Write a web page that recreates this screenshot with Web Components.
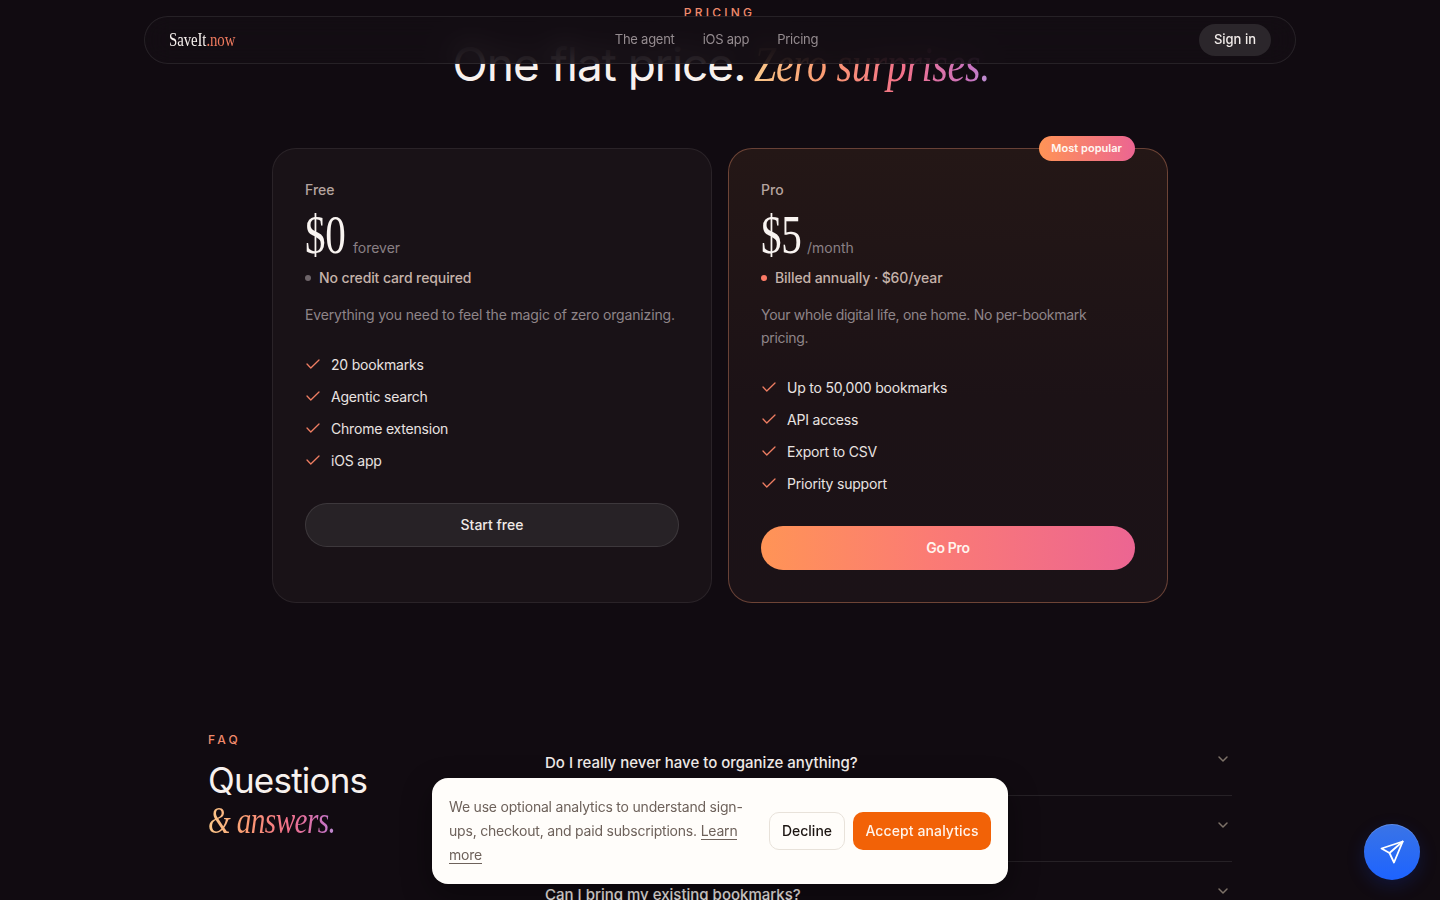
<!doctype html>
<html lang="en"><head><meta charset="utf-8"><title>SaveIt.now</title>
<style>
html,body{margin:0;height:900px;overflow:hidden;background:#110b11}
body{font-family:Inter,"Liberation Sans",sans-serif;color:#f7f1ee}
</style></head><body>
<site-nav></site-nav>
<pricing-section>
  <price-card name="Free" price="$0" period="forever" note="No credit card required" desc="Everything you need to feel the magic of zero organizing." cta="Start free">
    <check-item>20 bookmarks</check-item><check-item>Agentic search</check-item><check-item>Chrome extension</check-item><check-item>iOS app</check-item>
  </price-card>
  <price-card featured name="Pro" price="$5" period="/month" note="Billed annually · $60/year" desc="Your whole digital life, one home. No per-bookmark pricing." cta="Go Pro">
    <check-item>Up to 50,000 bookmarks</check-item><check-item>API access</check-item><check-item>Export to CSV</check-item><check-item>Priority support</check-item>
  </price-card>
</pricing-section>
<faq-section>
  <faq-item>Do I really never have to organize anything?</faq-item>
  <faq-item></faq-item>
  <faq-item>Can I bring my existing bookmarks?</faq-item>
</faq-section>
<cookie-banner></cookie-banner>
<chat-fab></chat-fab>
<script>
const SERIF='"Liberation Serif","Times New Roman",serif';
const GRAD='linear-gradient(90deg,#fbc88a 0%,#fb9a72 30%,#f2708a 62%,#c873c0 90%,#b79ad8 100%)';
function def(name,html){
  customElements.define(name,class extends HTMLElement{
    connectedCallback(){
      if(this.shadowRoot)return;
      const r=this.attachShadow({mode:'open'});
      r.innerHTML=typeof html==='function'?html(this):html;
    }
  });
}
def('site-nav',`<style>
:host{position:fixed;z-index:10;left:144px;top:16px;width:1152px;height:48px;box-sizing:border-box;display:grid;grid-template-columns:1fr auto 1fr;align-items:center;padding:0 24px;border:1px solid rgba(255,255,255,.085);border-radius:24px;background:rgba(20,13,19,.82);backdrop-filter:blur(14px);-webkit-backdrop-filter:blur(14px)}
.logo{font:400 19px/24px ${SERIF};color:#f7f1ee;display:inline-block;transform:scaleX(.78);transform-origin:left center;letter-spacing:-.1px;white-space:nowrap}
.logo span{color:#ee7a5e}
nav{display:flex;gap:28px;font-size:13px;line-height:16px;letter-spacing:-.25px;color:#958c90;margin:-2px 7px 0 0}
.end{justify-self:end}
.btn{display:block;height:32px;line-height:31px;padding:0 15px;border-radius:16px;background:#2b262b;font-size:13px;font-weight:500;color:#f2ecea}
</style><div><span class="logo">SaveIt<span>.now</span></span></div><nav><span>The agent</span><span>iOS app</span><span>Pricing</span></nav><div class="end"><span class="btn">Sign in</span></div>`);
def('pricing-section',`<style>
:host{display:block;padding-top:6px;text-align:center}
.eyebrow{font-size:12px;line-height:14px;font-weight:500;letter-spacing:.27em;color:#f08a6c;padding-right:1px}
h2{margin:0;padding:15px 0 0 5px;height:128px;box-sizing:border-box;display:flex;justify-content:center;align-items:baseline;gap:9px;font-size:46px;line-height:58px;font-weight:400;letter-spacing:-1px;white-space:nowrap}
.s{font:italic 400 50px/58px ${SERIF};display:inline-block;white-space:nowrap;letter-spacing:-.4px;transform:scaleX(.8);transform-origin:left center;width:max-content;padding-right:6px;margin-right:-63px;text-align:left;background:${GRAD};-webkit-background-clip:text;background-clip:text;color:transparent;padding-bottom:14px;margin-bottom:-14px}
.g{width:896px;margin:0 auto;display:grid;grid-template-columns:1fr 1fr;gap:16px;text-align:left}
</style><div class="eyebrow">PRICING</div><h2><span>One flat price.</span><span class="s">Zero surprises.</span></h2><div class="g"><slot></slot></div>`);
def('price-card',el=>{
 const a=n=>el.getAttribute(n),f=el.hasAttribute('featured');
 return `<style>
:host{display:block;position:relative;box-sizing:border-box;height:455px;padding:32px;border-radius:24px;border:1px solid ${f?'rgba(240,150,110,.36)':'rgba(255,255,255,.075)'};background:${f?'linear-gradient(180deg,#241716 0%,#1c1216 55%,#1b1217 100%)':'#191217'}}
.name{font-size:14px;line-height:18px;font-weight:500;color:#b5a49f}
.pr{display:flex;align-items:baseline;gap:7px;margin-top:11px;height:50px}
.amt{font:400 54px/50px ${SERIF};color:#f9f4f1;display:inline-block;transform:scaleX(.76);transform-origin:left center;width:41px;letter-spacing:-.5px;${f?'width:39px':''}}
.per{font-size:14px;color:#8a8085}
.note{display:flex;align-items:center;gap:8px;margin-top:7px;height:20px;font-size:14px;font-weight:500;color:#c5b2aa;letter-spacing:-.1px}
.dot{width:6px;height:6px;border-radius:50%;margin-top:1px;background:${f?'#fb7a66':'#6d6469'}}
.desc{margin:16px 0 0;font-size:14px;line-height:23px;letter-spacing:${f?'-.3px':'-.15px'};color:#8f8589}
ul{list-style:none;margin:0;padding:22px 0 0;display:block}
.cta{margin-top:27px;height:44px;box-sizing:border-box;padding-bottom:2px;border-radius:22px;display:flex;align-items:center;justify-content:center;font-size:14px;font-weight:500;${f?`background:linear-gradient(90deg,#ff9456 0%,#fb7b74 45%,#ec6592 100%);color:#fff4ee;font-weight:600;letter-spacing:-.3px`:'background:#272226;border:1px solid rgba(255,255,255,.1);color:#efe9e6'}}
.badge{position:absolute;top:-13px;right:32px;height:25px;padding:0 13px 0 12px;border-radius:13px;background:linear-gradient(90deg,#ff9456,#ec6592);font-size:11px;font-weight:600;line-height:25px;color:#fff7f2;letter-spacing:.04px}
</style>${f?'<span class="badge">Most popular</span>':''}<div class="name">${a('name')}</div><div class="pr"><span class="amt">${a('price')}</span><span class="per">${a('period')}</span></div><div class="note"><span class="dot"></span>${a('note')}</div><p class="desc">${a('desc')}</p><ul><slot></slot></ul><div class="cta">${a('cta')}</div>`});
def('check-item',`<style>
:host{display:flex;align-items:center;gap:12px;height:32px;font-size:14px;letter-spacing:-.2px;color:#e9e3e1}
svg{width:14px;height:14px;flex:none;overflow:visible}
</style><svg viewBox="0 0 14 14" fill="none" stroke="#ee7d62" stroke-width="1.3" stroke-linecap="round" stroke-linejoin="round"><path d="M2 7 5.8 11 14 3"/></svg><span><slot></slot></span>`);
def('faq-section',`<style>
:host{display:grid;grid-template-columns:337px 1fr;width:1024px;margin:126px auto 0}
.eyebrow{font-size:12px;line-height:14px;font-weight:500;letter-spacing:.27em;color:#f08a6c;margin-top:4px}
h3{margin:13px 0 0;font-size:35px;line-height:40px;font-weight:400;letter-spacing:-.8px;color:#f7f1ee}
.s{font:italic 400 38px/40px ${SERIF};display:inline-block;white-space:nowrap;transform:scaleX(.77);transform-origin:left center;width:max-content;padding-right:4px;background:${GRAD};-webkit-background-clip:text;background-clip:text;color:transparent}
.r{padding-top:1px}
</style><div><div class="eyebrow">FAQ</div><h3>Questions<br><span class="s">&amp; answers.</span></h3></div><div class="r"><slot></slot></div>`);
def('faq-item',`<style>
:host{display:flex;justify-content:space-between;align-items:flex-start;box-sizing:border-box;height:66px;padding:22px 0 0;border-bottom:1px solid rgba(255,255,255,.09);font-size:15px;line-height:22px;font-weight:500;color:#f3edea}
svg{width:16px;height:16px;margin:-1px 1px 0 0;flex:none}
</style><span><slot></slot></span><svg viewBox="0 0 16 16" fill="none" stroke="#7d7268" stroke-width="1.5" stroke-linecap="round" stroke-linejoin="round"><path d="M4 6l4 4 4-4"/></svg>`);
def('cookie-banner',`<style>
:host{position:fixed;z-index:20;left:432px;top:778px;width:576px;height:106px;box-sizing:border-box;padding:0 17px;display:flex;align-items:center;gap:24px;border-radius:16px;background:#fffdfa;box-shadow:0 10px 30px rgba(0,0,0,.4)}
p{margin:0;flex:1;font-size:14px;line-height:24px;letter-spacing:-.2px;color:#6e625b}
a{color:#6e625b;text-decoration:none;border-bottom:1px solid #6e625b}
.b{display:flex;gap:8px;flex:none}
.x{height:38px;box-sizing:border-box;border-radius:10px;display:flex;align-items:center;justify-content:center;font-size:14px;line-height:16px;font-weight:500;padding-bottom:1px}
.d{width:76px;border:1px solid #e8e2da;color:#1c1512}
.a{width:138px;background:#f26207;color:#fff3ea;letter-spacing:.1px}
</style><p>We use optional analytics to understand sign-ups, checkout, and paid subscriptions. <a>Learn more</a></p><div class="b"><span class="x d">Decline</span><span class="x a">Accept analytics</span></div>`);
def('chat-fab',`<style>
:host{position:fixed;z-index:20;left:1364px;top:824px;width:56px;height:56px;border-radius:50%;display:flex;align-items:center;justify-content:center;background:linear-gradient(180deg,#3a74e6,#1d63ff);box-shadow:0 6px 18px rgba(20,60,200,.22),inset 0 1px 0 rgba(255,255,255,.18)}
svg{width:24px;height:24px}
</style><svg viewBox="0 0 24 24" fill="none" stroke="#fff" stroke-width="1.8" stroke-linecap="round" stroke-linejoin="round"><path d="M22.7 1.5 1.5 8.5 9.5 13 14 22.5z"/><path d="M22.7 1.5 9.5 13"/></svg>`);
</script>
</body></html>
